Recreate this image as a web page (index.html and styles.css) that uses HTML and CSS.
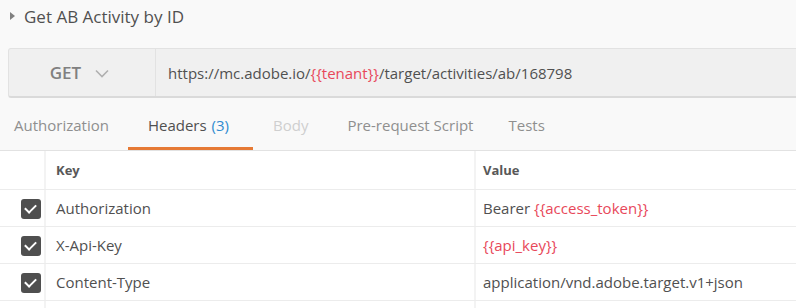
FILE: index.html
```html
<!DOCTYPE html>
<html lang="en">
<head>
  <meta charset="UTF-8">
  <title>Get AB Activity by ID</title>
  <link rel="stylesheet" href="styles.css">
</head>
<body>
  <div class="request-title">
    <span class="caret"></span>
    <span>Get AB Activity by ID</span>
  </div>

  <div class="url-bar">
    <div class="method">
      <span>GET</span>
      <svg class="chevron" width="14" height="9" viewBox="0 0 14 9">
        <path d="M1 1.5 L7 7.5 L13 1.5" fill="none" stroke="#b0b0b0" stroke-width="1.6"/>
      </svg>
    </div>
    <div class="url"><span>https://mc.adobe.io/<span class="var">{{tenant}}</span>/target/activities/ab/168798</span></div>
  </div>

  <div class="tabs">
    <div class="tab">Authorization</div>
    <div class="tab active">Headers <span class="count">(3)</span></div>
    <div class="tab disabled">Body</div>
    <div class="tab">Pre-request Script</div>
    <div class="tab last">Tests</div>
  </div>

  <div class="table">
    <div class="row head">
      <div class="cell check"></div>
      <div class="cell key">Key</div>
      <div class="cell value">Value</div>
    </div>
    <div class="row">
      <div class="cell check"><span class="box"></span></div>
      <div class="cell key">Authorization</div>
      <div class="cell value">Bearer <span class="var">{{access_token}}</span></div>
    </div>
    <div class="row">
      <div class="cell check"><span class="box"></span></div>
      <div class="cell key">X-Api-Key</div>
      <div class="cell value"><span class="var">{{api_key}}</span></div>
    </div>
    <div class="row">
      <div class="cell check"><span class="box"></span></div>
      <div class="cell key">Content-Type</div>
      <div class="cell value">application/vnd.adobe.target.v1+json</div>
    </div>
    <div class="row">
      <div class="cell check"></div>
      <div class="cell key"></div>
      <div class="cell value"></div>
    </div>
  </div>
</body>
</html>
```

FILE: styles.css
```css
body {
  margin: 0;
  font-family: 'Open Sans', sans-serif;
  background-color: #f9f9f9;
  color: #505050;
  overflow: hidden;
}

.request-title {
  display: flex;
  align-items: center;
  gap: 9px;
  height: 32px;
  padding-left: 10px;
  font-size: 17px;
  color: #505050;
}

.caret {
  width: 0;
  height: 0;
  border-top: 4px solid transparent;
  border-bottom: 4px solid transparent;
  border-left: 5px solid #808080;
}

.url-bar {
  display: flex;
  height: 47px;
  margin: 16px -10px 0 8px;
  background: #f0f0f0;
  border: 1px solid #e2e2e2;
  border-bottom: 2px solid #dadada;
  border-radius: 3px;
}

.method {
  display: flex;
  align-items: center;
  justify-content: center;
  gap: 14px;
  width: 144px;
  padding-right: 2px;
  border-right: 1px solid #e2e2e2;
  font-size: 17px;
  font-weight: 600;
  color: #808080;
}

.method span {
  margin-left: -3px;
}

.chevron {
  margin-top: 1px;
}

.url {
  display: flex;
  align-items: center;
  padding-left: 12px;
  font-size: 15px;
  color: #505050;
}

.var {
  color: #e8485a;
}

.tabs {
  display: flex;
  height: 51px;
  margin-top: 1px;
  border-bottom: 1px solid #e2e2e2;
}

.tab {
  display: flex;
  align-items: center;
  padding: 3px 19px 0 20px;
  font-size: 15px;
  color: #8f8f8f;
  border-bottom: 3px solid transparent;
}

.tab:first-child {
  padding-left: 14px;
}

.tab.active {
  color: #505050;
  padding-right: 24px;
  border-bottom-color: #e67a35;
}

.tab.disabled {
  color: #cfcfcf;
}

.tab.last {
  padding-left: 16px;
}

.count {
  color: #2f8bd0;
  margin-left: 5px;
}

.table {
  background: #fff;
}

.row {
  display: flex;
  height: 36px;
  border-bottom: 1px solid #ececec;
}

.row.head {
  height: 38px;
  font-weight: 700;
  color: #585858;
}

.cell {
  line-height: 37px;
  white-space: nowrap;
}

.check {
  display: flex;
  align-items: center;
  justify-content: flex-end;
  width: 42px;
  padding-right: 2px;
  border-right: 2px solid #f3f3f3;
}

.key {
  width: 418px;
  padding-left: 10px;
  font-size: 15px;
  border-right: 2px solid #f3f3f3;
}

.value {
  flex: 1;
  padding-left: 7px;
  font-size: 15px;
}

.head .key,
.head .value {
  font-size: 13px;
  line-height: 39px;
}

.box {
  position: relative;
  width: 20px;
  height: 20px;
  margin: 1px 1px 0 0;
  background: #4f4f4f;
  border-radius: 3px;
}

.box::after {
  content: '';
  position: absolute;
  left: 6px;
  top: 3px;
  width: 5px;
  height: 9px;
  border: solid #fff;
  border-width: 0 2px 2px 0;
  transform: rotate(45deg);
}
```
